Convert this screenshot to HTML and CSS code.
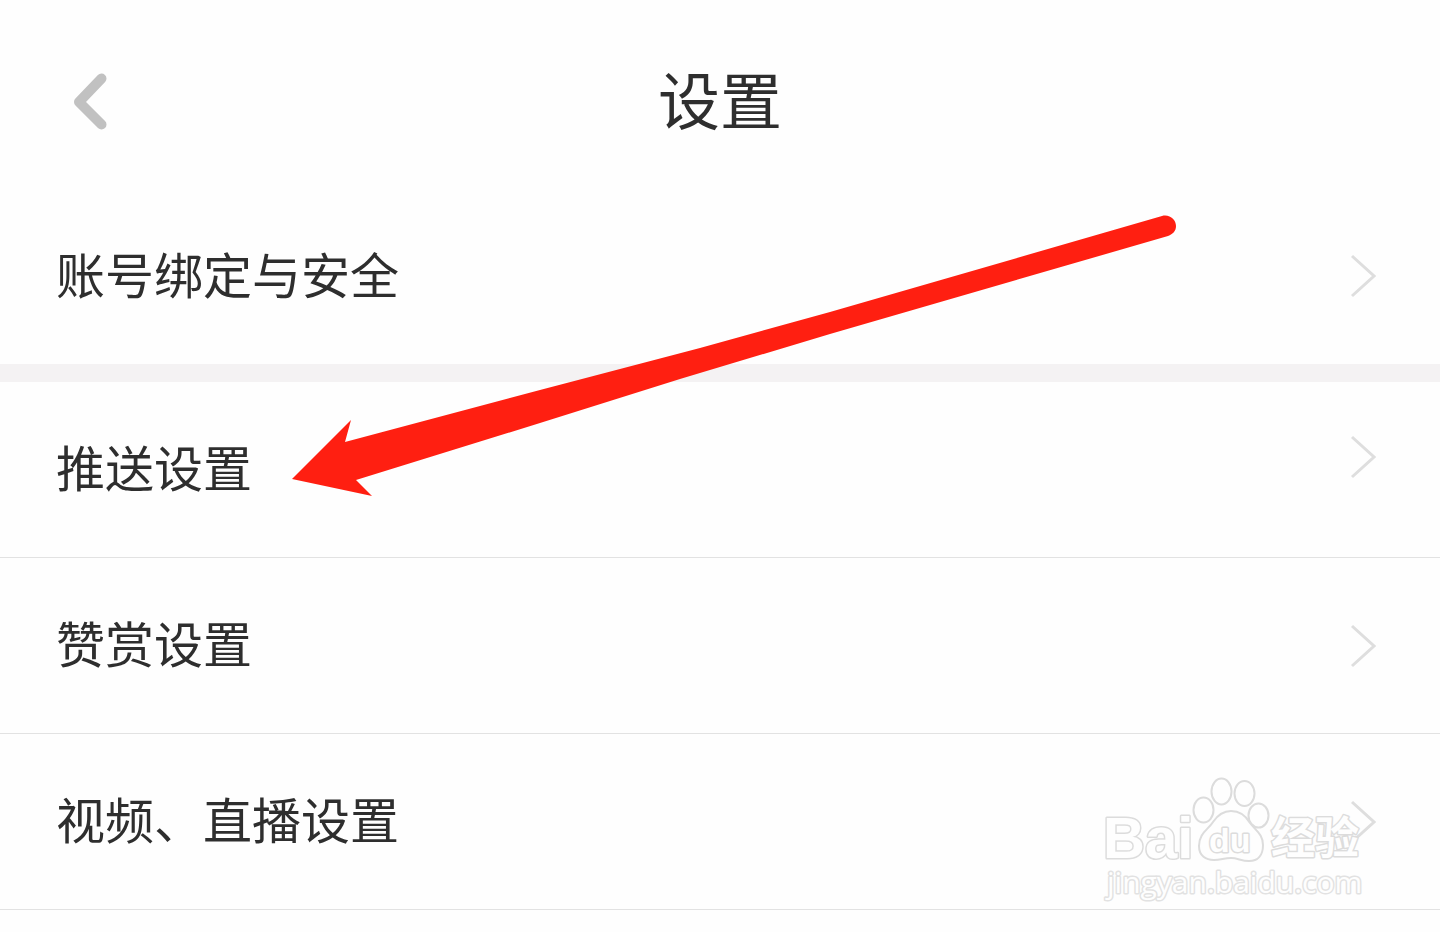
FILE: index.html
```
<!DOCTYPE html>
<html lang="zh-CN">
<head>
<meta charset="UTF-8">
<meta name="viewport" content="width=device-width, initial-scale=1.0">
<title>设置</title>
<link rel="stylesheet" href="styles.css">
</head>

<body>

<header class="topbar">
    <button class="back" type="button" aria-label="返回">
        <svg width="34" height="58" viewBox="0 0 34 58"><path d="M28.500 5.500L6 29L28.500 51.500" /></svg>
    </button>
    <h1>设置</h1>
</header>

<main>

<nav class="group">
    <a class="row" href="#account">
        <span>账号绑定与安全</span>
        <svg class="chevron" width="26" height="44" viewBox="0 0 26 44"><path d="M2 2L24 22L2 42" /></svg>
    </a>
</nav>

<nav class="group">
    <a class="row row-raised" href="#push">
        <span>推送设置</span>
        <svg class="chevron" width="26" height="44" viewBox="0 0 26 44"><path d="M2 2L24 22L2 42" /></svg>
    </a>
    <a class="row" href="#reward">
        <span>赞赏设置</span>
        <svg class="chevron" width="26" height="44" viewBox="0 0 26 44"><path d="M2 2L24 22L2 42" /></svg>
    </a>
    <a class="row" href="#video">
        <span>视频、直播设置</span>
        <svg class="chevron" width="26" height="44" viewBox="0 0 26 44"><path d="M2 2L24 22L2 42" /></svg>
    </a>

    <!-- red pointer to the push settings row -->
    <svg class="pointer" width="884" height="284" viewBox="292 214 884 284">
        <path d="M292 479L351 420L345 442L540 390L700 348L830 312L1162 216C1170 214 1176 220 1176 226C1176 231 1173 234 1168 236L830 334L680 379L540 423L356 480L372 496Z" />
    </svg>

    <svg class="watermark" width="264" height="130" viewBox="1102 774 264 130">
        <text class="wm-bai" x="1103" y="858">Bai</text>
        <g class="wm-paw">
            <ellipse cx="1203.500" cy="810" rx="10" ry="12.500" />
            <ellipse cx="1221.500" cy="791.500" rx="10" ry="13" />
            <ellipse cx="1244.500" cy="793.500" rx="10" ry="12.500" />
            <ellipse cx="1258.500" cy="815.500" rx="10" ry="12" />
            <path d="M1231 811C1222 811 1217 816 1213 822C1208 830 1199 833 1199 846C1199 856 1206 860 1214 860C1221 860 1224 858 1231 858C1238 858 1241 861 1249 861C1258 861 1263 855 1263 845C1263 834 1256 831 1250 823C1246 816 1240 811 1231 811Z" />
        </g>
        <text class="wm-du" x="1209" y="852">du</text>
        <text class="wm-cn" x="1271" y="854">经验</text>
        <text class="wm-url" x="1107" y="893">jingyan.baidu.com</text>
    </svg>
</nav>

</main>

</body>
</html>
```

FILE: styles.css
```
*{
    box-sizing:border-box;
}

body{
    margin:0;
    min-height:100vh;
    background:#fefefe;
    color:#2e2e2e;
    font-family:"Noto Sans CJK SC", sans-serif;
}

.topbar{
    display:grid;
    grid-template-columns:1fr auto 1fr;
    align-items:center;
    padding:56px 73px 40px;
}

.topbar h1{
    margin:0;
    padding-bottom:8px;
    font-size:62px;
    line-height:84px;
    font-weight:400;
}

.back{
    justify-self:start;
    display:flex;
    padding:0;
    border:none;
    background:none;
    cursor:pointer;
}

.back path{
    fill:none;
    stroke:#c1c1c1;
    stroke-width:10;
    stroke-linecap:round;
    stroke-linejoin:round;
}

.group{
    position:relative;
}

.group + .group{
    border-top:18px solid #f4f2f3;
}

.row{
    display:flex;
    justify-content:space-between;
    align-items:center;
    min-height:176px;
    padding:0 64px 0 56px;
    color:inherit;
    font-size:49px;
    line-height:72px;
    text-decoration:none;
}

.row span{
    padding-bottom:7px;
}

.group + .group .row{
    border-bottom:1px solid #e2e2e2;
}

.chevron path{
    fill:none;
    stroke:#dedede;
    stroke-width:3;
}

.row-raised .chevron{
    margin-bottom:26px;
}

.pointer{
    position:absolute;
    left:292px;
    top:-168px;
    fill:#ff1f11;
    pointer-events:none;
}

.watermark{
    position:absolute;
    right:74px;
    bottom:6px;
    fill:#fefefe;
    stroke:#dcdcdc;
    stroke-width:2;
    stroke-linejoin:round;
    pointer-events:none;
}

.watermark text{
    paint-order:stroke;
    stroke-width:3;
}

.wm-bai{
    font:bold 58px "Liberation Sans", sans-serif;
}

.wm-du{
    font:bold 34px "Liberation Sans", sans-serif;
}

.wm-cn{
    font:bold 44px "Noto Sans CJK SC", sans-serif;
}

.watermark .wm-url{
    font:30px "Open Sans", sans-serif;
    stroke:#e2e2e2;
}
```
